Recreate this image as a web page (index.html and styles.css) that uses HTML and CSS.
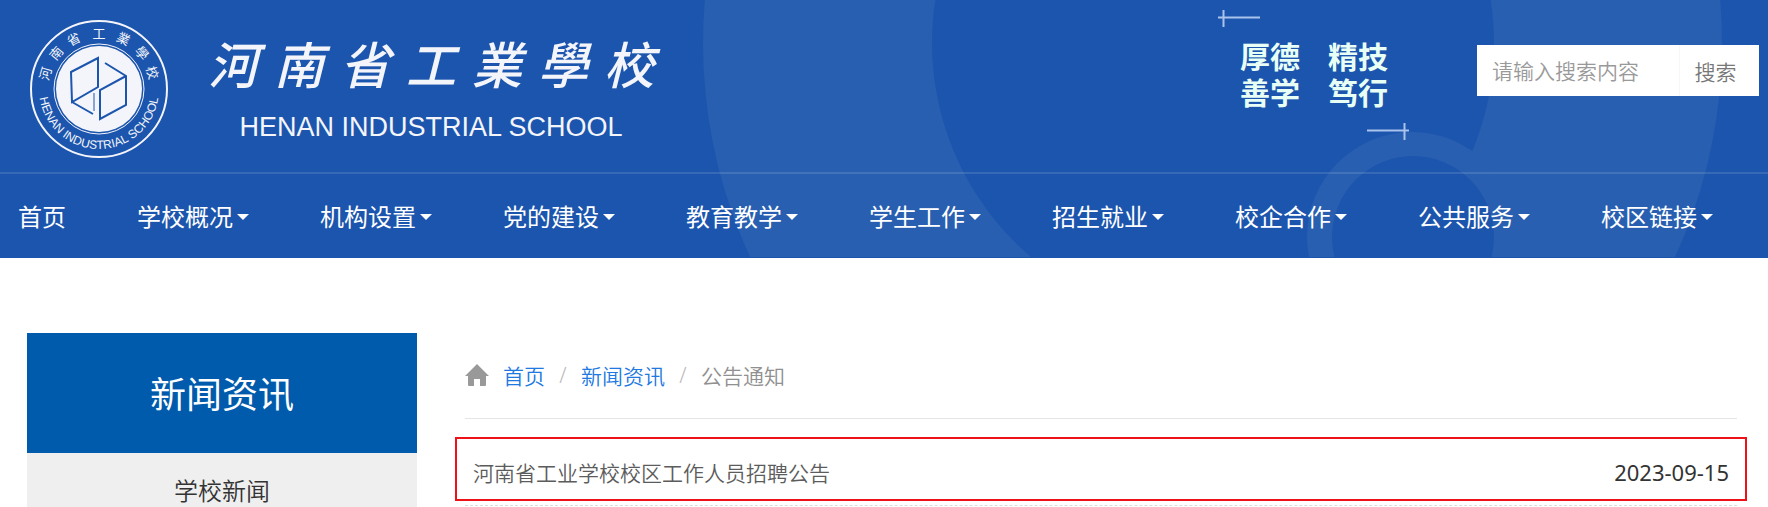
FILE: index.html
```html
<!DOCTYPE html>
<html lang="zh-CN">
<head>
<meta charset="utf-8">
<title>河南省工业学校</title>
<link rel="stylesheet" href="styles.css">
</head>
<body>
<header class="header">
  <svg class="header-rings" width="1768" height="257" viewBox="0 0 1768 257" aria-hidden="true">
    <mask id="cut">
      <rect width="1768" height="257" fill="#fff"/>
      <circle cx="1413" cy="237" r="81" fill="#000"/>
    </mask>
    <g class="ring-shape" mask="url(#cut)">
      <path fill-rule="evenodd" d="M703 43a509.500 509.500 0 0 1 1019 0a509.500 509.500 0 0 1-1019 0zM932 43a281 281 0 0 0 562 0a281 281 0 0 0-562 0z"/>
      <circle cx="1412" cy="237" r="105"/>
    </g>
  </svg>
  <div class="header-top">
    <a class="brand" href="#">
      <svg class="emblem" width="140" height="140" viewBox="-70 -70 140 140" aria-hidden="true">
        <defs><path id="arc" d="M-60 0A60 60 0 0 0 60 0"/></defs>
        <circle class="emblem-line" r="68" stroke-width="2"/>
        <circle class="emblem-line" r="45" stroke-width="1"/>
        <circle class="emblem-disc" r="43"/>
        <g class="emblem-cube">
          <path d="M-28-17L-1-31V-2L-27 13ZM-27 13L-6 25"/>
          <path d="M6-26L27-13V16L1 30V1L27-13"/>
          <path class="emblem-faint" d="M-5 4V22"/>
        </g>
        <g class="emblem-cn">
          <text y="-51" transform="rotate(-74)">河</text>
          <text y="-51" transform="rotate(-50)">南</text>
          <text y="-51" transform="rotate(-27)">省</text>
          <text y="-51">工</text>
          <text y="-51" transform="rotate(26)">業</text>
          <text y="-51" transform="rotate(50)">學</text>
          <text y="-51" transform="rotate(73)">校</text>
        </g>
        <text class="emblem-en"><textPath href="#arc" startOffset="50%">HENAN INDUSTRIAL SCHOOL</textPath></text>
      </svg>
      <span class="brand-text">
        <span class="brand-cn"><span>河</span><span>南</span><span>省</span><span>工</span><span>業</span><span>學</span><span>校</span></span>
        <span class="brand-en">HENAN INDUSTRIAL SCHOOL</span>
      </span>
    </a>
    <div class="motto">
      <svg class="motto-mark" width="43" height="18" viewBox="0 0 43 18" aria-hidden="true"><path d="M0 7.500H42M5.500 0V17"/></svg>
      <div class="motto-words"><span>厚德</span><span>精技</span><span>善学</span><span>笃行</span></div>
      <svg class="motto-mark motto-mark-end" width="43" height="18" viewBox="0 0 43 18" aria-hidden="true"><path d="M0 7.500H42M37.500 0V17"/></svg>
    </div>
    <form class="search">
      <input class="search-input" type="text" placeholder="请输入搜索内容" aria-label="请输入搜索内容">
      <button class="search-button" type="button">搜索</button>
    </form>
  </div>
  <nav class="nav">
    <a href="#">首页</a>
    <a class="has-menu" href="#">学校概况</a>
    <a class="has-menu" href="#">机构设置</a>
    <a class="has-menu" href="#">党的建设</a>
    <a class="has-menu" href="#">教育教学</a>
    <a class="has-menu" href="#">学生工作</a>
    <a class="has-menu" href="#">招生就业</a>
    <a class="has-menu" href="#">校企合作</a>
    <a class="has-menu" href="#">公共服务</a>
    <a class="has-menu" href="#">校区链接</a>
  </nav>
</header>
<div class="page">
  <aside class="sidebar">
    <h2 class="sidebar-title">新闻资讯</h2>
    <a class="sidebar-link" href="#">学校新闻</a>
  </aside>
  <main class="main">
    <nav class="crumbs" aria-label="breadcrumb">
      <svg class="home-icon" width="24" height="22" viewBox="0 0 24 22" aria-hidden="true"><path d="M12 0L24 12H21V21Q21 22 20 22H15V15H9V22H4Q3 22 3 21V12H0Z"/></svg>
      <a href="#">首页</a><span class="slash">/</span><a href="#">新闻资讯</a><span class="slash">/</span><span class="current">公告通知</span>
    </nav>
    <ul class="news">
      <li class="news-row">
        <a class="news-item" href="#"><span>河南省工业学校校区工作人员招聘公告</span><time class="news-date">2023-09-15</time></a>
      </li>
    </ul>
  </main>
</div>
</body>
</html>
```
FILE: styles.css
```css
* { box-sizing: border-box; }

body {
  margin: 0;
  background: #fff;
  color: #333;
  font-family: "Noto Sans", "Noto Sans CJK SC", sans-serif;
  font-size: 21px;
}

a { color: inherit; text-decoration: none; }

.header {
  position: relative;
  background: #1c55ad;
  color: #fff;
}

.header-rings {
  position: absolute;
  top: 0;
  right: 0;
}

.ring-shape { fill: #285fb1; }

.header-top {
  position: relative;
  display: flex;
  align-items: flex-start;
  height: 174px;
  padding-right: 9px;
  border-bottom: 2px solid rgba(255, 255, 255, 0.12);
}

.brand {
  display: flex;
  gap: 39px;
  margin: 19px auto 0 29px;
  color: #f4f5fa;
}

.emblem { display: block; }
.emblem-line { fill: none; stroke: #f4f5fa; }
.emblem-disc { fill: #f4f5fa; }
.emblem-cube { fill: none; stroke: #1c55ad; stroke-width: 2; }
.emblem-faint { opacity: 0.5; }
.emblem-cn { fill: #f4f5fa; font-size: 13px; text-anchor: middle; }
.emblem-en {
  fill: #f4f5fa;
  font-family: "Liberation Sans", sans-serif;
  font-size: 12px;
  text-anchor: middle;
}

.brand-text {
  display: flex;
  flex-direction: column;
  align-items: center;
  gap: 14px;
  padding-top: 14px;
}

.brand-cn {
  display: flex;
  gap: 16px;
  font-size: 50px;
  font-style: italic;
  font-weight: 500;
  line-height: 64px;
}

.brand-en {
  font-family: "Liberation Sans", sans-serif;
  font-size: 27px;
  line-height: 32px;
}

.motto {
  display: flex;
  flex-direction: column;
  width: 192px;
  margin: 10px 67px 0 0;
}

.motto-mark { fill: none; stroke: #a9c3ec; stroke-width: 2; }
.motto-mark-end { align-self: flex-end; }

.motto-words {
  display: grid;
  grid-template-columns: auto auto;
  justify-content: center;
  column-gap: 28px;
  padding: 11px 0 12px;
  color: #e8fff6;
  font-size: 30px;
  font-weight: 700;
  line-height: 36px;
}

.search {
  display: flex;
  width: 282px;
  height: 51px;
  margin-top: 45px;
  background: #fff;
}

.search-input {
  flex: 1;
  min-width: 0;
  padding: 0 15px;
  border: 0;
  border-right: 1px solid #f7f7f7;
  background: #fff;
  font: inherit;
  font-weight: 350;
}

.search-input::placeholder { color: #999; opacity: 1; }

.search-button {
  width: 79px;
  padding: 0 22px 0 14px;
  border: 0;
  background: #fff;
  color: #777;
  font: inherit;
  font-weight: 350;
}

.nav {
  position: relative;
  display: flex;
  justify-content: space-between;
  padding: 2px 55px 0 18px;
  font-size: 24px;
  line-height: 82px;
}

.nav a { display: flex; align-items: center; }

.has-menu::after {
  content: "";
  margin-left: 4px;
  border: 6px solid transparent;
  border-top-color: #fff;
  border-bottom: 0;
}

.page {
  display: flex;
  gap: 48px;
  padding: 75px 31px 0 27px;
}

.sidebar { width: 390px; background: #efefef; }

.sidebar-title {
  margin: 0;
  padding-top: 4px;
  background: #005bac;
  color: #fff;
  font-size: 36px;
  font-weight: 400;
  line-height: 116px;
  text-align: center;
}

.sidebar-link {
  display: block;
  padding-top: 22px;
  font-size: 24px;
  font-weight: 350;
  line-height: 32px;
  text-align: center;
}

.main { flex: 1; }

.crumbs {
  display: flex;
  align-items: center;
  height: 86px;
  padding-bottom: 2px;
  border-bottom: 1px solid #e5e5e5;
  color: #2079e0;
  font-weight: 350;
}

.home-icon { margin-right: 14px; fill: #999; }
.slash { width: 36px; color: #bbb; text-align: center; }
.current { color: #909090; }

.news { margin: 0; padding: 0; list-style: none; }

.news-row {
  padding: 18px 0 4px;
  border-bottom: 1px dashed #ddd;
}

.news-item {
  display: flex;
  align-items: center;
  justify-content: space-between;
  height: 64px;
  margin: 0 -10px;
  padding: 6px 16px 0;
  border: 2px solid #ee1118;
  color: #5c5c5c;
  font-weight: 350;
}

.news-date { color: #333; font-size: 22px; font-weight: 400; }
```
